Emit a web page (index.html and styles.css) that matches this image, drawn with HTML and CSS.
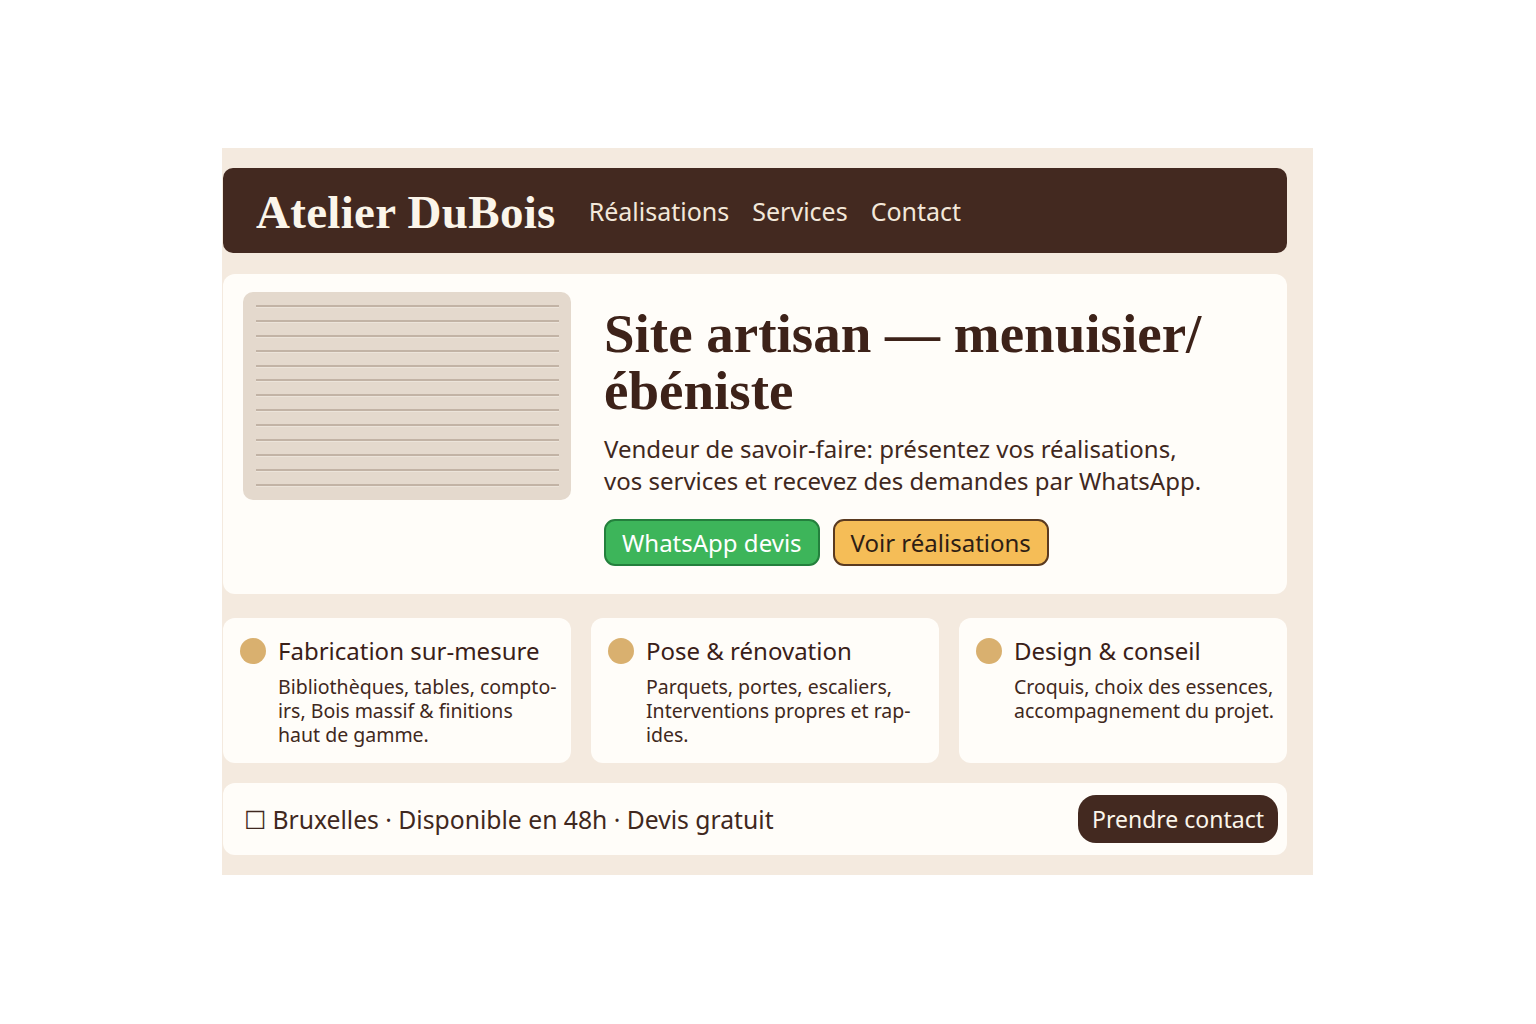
FILE: index.html
```html
<!DOCTYPE html>
<html lang="fr">
<head>
<meta charset="utf-8">
<title>Atelier DuBois</title>
<link rel="stylesheet" href="styles.css">
</head>
<body>
<div class="frame">
  <header class="topbar">
    <div class="logo">Atelier DuBois</div>
    <nav class="nav">
      <a href="#">Réalisations</a>
      <a href="#">Services</a>
      <a href="#">Contact</a>
    </nav>
  </header>

  <section class="hero">
    <div class="photo">
      <span></span><span></span><span></span><span></span><span></span><span></span><span></span><span></span><span></span><span></span><span></span><span></span><span></span>
    </div>
    <div class="hero-text">
      <h1>Site artisan — menuisier/ ébéniste</h1>
      <p class="lead">Vendeur de savoir-faire: présentez vos réalisations, vos services et recevez des demandes par WhatsApp.</p>
      <div class="actions">
        <a class="btn btn-green" href="#">WhatsApp devis</a>
        <a class="btn btn-orange" href="#">Voir réalisations</a>
      </div>
    </div>
  </section>

  <section class="services">
    <div class="card">
      <div class="card-head"><span class="dot"></span><h2>Fabrication sur-mesure</h2></div>
      <p>Bibliothèques, tables, compto-<br>irs, Bois massif &amp; finitions<br>haut de gamme.</p>
    </div>
    <div class="card">
      <div class="card-head"><span class="dot"></span><h2>Pose &amp; rénovation</h2></div>
      <p>Parquets, portes, escaliers, Interventions propres et rap-<br>ides.</p>
    </div>
    <div class="card">
      <div class="card-head"><span class="dot"></span><h2>Design &amp; conseil</h2></div>
      <p>Croquis, choix des essences, accompagnement du projet.</p>
    </div>
  </section>

  <section class="infobar">
    <div class="info">☐ Bruxelles · Disponible en 48h · Devis gratuit</div>
    <a class="btn-dark" href="#">Prendre contact</a>
  </section>
</div>
</body>
</html>
```

FILE: styles.css
```css
* { box-sizing: border-box; }

html, body {
  margin: 0;
  padding: 0;
  background: #ffffff;
}

body {
  font-family: "Noto Sans", "Open Sans", sans-serif;
  color: #3f2820;
  padding: 148px 0 0 222px;
}

a { text-decoration: none; color: inherit; }

.frame {
  width: 1091px;
  height: 727px;
  background: #f4eadf;
  padding: 20px 26px 20px 1px;
  display: flex;
  flex-direction: column;
}

.topbar {
  height: 85px;
  background: #432920;
  border-radius: 10px;
  display: flex;
  align-items: center;
  padding: 0 0 0 33px;
  gap: 33px;
  flex: none;
}

.logo {
  font-family: "Liberation Serif", "DejaVu Serif", serif;
  font-weight: 700;
  font-size: 47px;
  color: #fbf5ea;
  letter-spacing: 0.3px;
  padding-top: 2px;
}

.nav {
  display: flex;
  gap: 23px;
  font-size: 25px;
  color: #f3e8da;
  padding-top: 1px;
}

.hero {
  height: 320px;
  margin-top: 21px;
  background: #fffdf9;
  border-radius: 12px;
  display: flex;
  padding: 18px 20px;
  gap: 33px;
  flex: none;
}

.photo {
  width: 328px;
  height: 208px;
  background: #e4d9cd;
  border-radius: 10px;
  padding: 13px 12px 0 13px;
  display: flex;
  flex-direction: column;
  gap: 11.9px;
  flex: none;
}

.photo span {
  display: block;
  height: 2px;
  background: #c2b3a5;
  border-bottom: 1px solid #ece4da;
  box-sizing: content-box;
}

.hero-text {
  display: flex;
  flex-direction: column;
}

.hero-text h1 {
  font-family: "Liberation Serif", "DejaVu Serif", serif;
  font-weight: 700;
  font-size: 55px;
  line-height: 57px;
  color: #3d2219;
  margin: 13px 0 0 0;
  width: 640px;
}

.lead {
  font-size: 24px;
  line-height: 32px;
  margin: 14px 0 0 0;
  color: #3f2820;
  width: 608px;
}

.actions {
  display: flex;
  gap: 13px;
  margin-top: 22px;
}

.btn {
  height: 47px;
  border-radius: 11px;
  display: inline-flex;
  align-items: center;
  padding: 0 16px;
  font-size: 24px;
}

.btn-green {
  background: #3db55a;
  border: 2px solid #24803d;
  color: #ffffff;
}

.btn-orange {
  background: #f5bd57;
  border: 2px solid #5a3a20;
  color: #2e1d14;
}

.services {
  display: grid;
  grid-template-columns: 348px 348px 1fr;
  gap: 20px;
  height: 145px;
  margin-top: 24px;
  flex: none;
}

.card {
  background: #fffdf9;
  border-radius: 12px;
  padding: 18px 6px 0 17px;
}

.card-head {
  display: flex;
  align-items: center;
  gap: 12px;
}

.dot {
  width: 26px;
  height: 26px;
  border-radius: 50%;
  background: #d9b06f;
  flex: none;
}

.card h2 {
  margin: 0;
  font-size: 24px;
  font-weight: 400;
  line-height: 30px;
  color: #3a2018;
}

.card p {
  margin: 9px 0 0 38px;
  font-size: 19.5px;
  line-height: 24px;
  color: #3f2820;
}

.infobar {
  height: 72px;
  margin-top: 20px;
  background: #fffdf9;
  border-radius: 12px;
  display: flex;
  align-items: center;
  justify-content: space-between;
  padding: 0 9px 0 21px;
  flex: none;
}

.info {
  font-size: 24.7px;
  color: #3f2820;
}

.btn-dark {
  height: 48px;
  padding: 0 14px;
  border-radius: 18px;
  background: #432920;
  color: #fbf5ea;
  font-size: 23px;
  display: inline-flex;
  align-items: center;
}
```
